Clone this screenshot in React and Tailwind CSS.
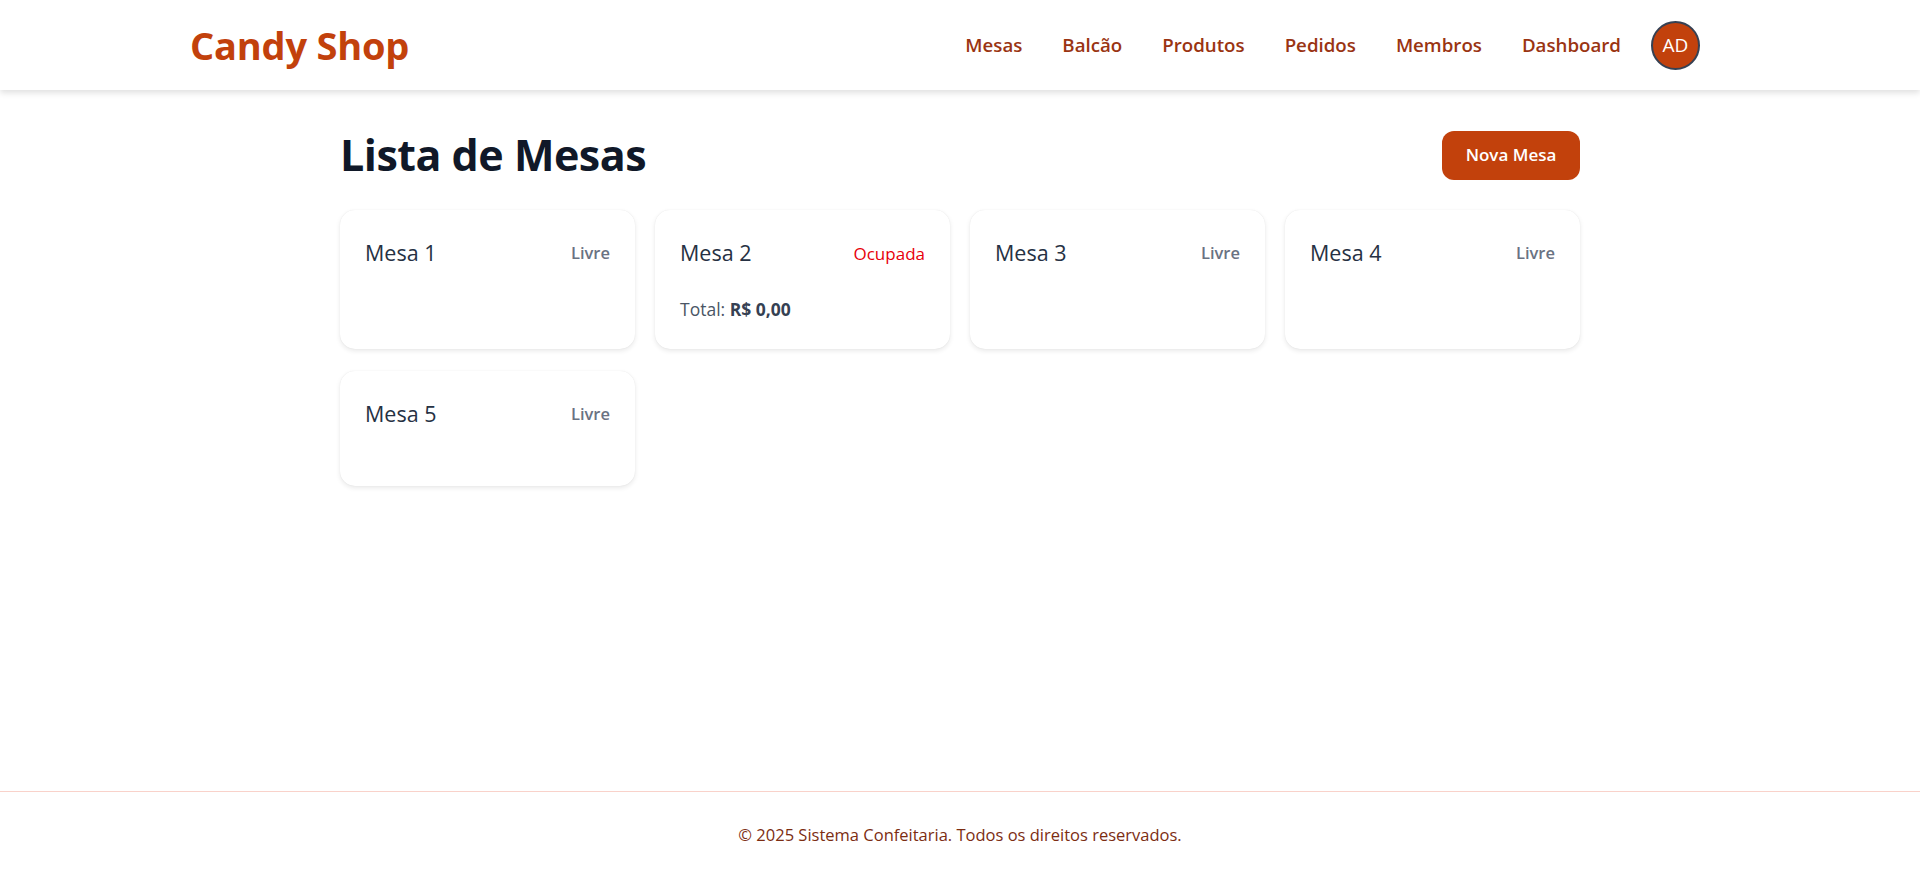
import React from "react";

const mesas = [
  { nome: "Mesa 1", status: "Livre" },
  { nome: "Mesa 2", status: "Ocupada", total: "R$ 0,00" },
  { nome: "Mesa 3", status: "Livre" },
  { nome: "Mesa 4", status: "Livre" },
  { nome: "Mesa 5", status: "Livre" },
];

const links = ["Mesas", "Balcão", "Produtos", "Pedidos", "Membros", "Dashboard"];

function MesaCard({ mesa }) {
  const ocupada = mesa.status === "Ocupada";
  return (
    <div className="bg-white rounded-[15px] p-[25px] min-h-[115px] shadow-[0_2px_5px_rgba(0,0,0,0.09),0_0_1px_rgba(0,0,0,0.1)]">
      <div className="flex items-center justify-between h-[35px] pt-[2px]">
        <span className="text-[21.5px] font-medium text-[#263143]">{mesa.nome}</span>
        <span
          className={
            ocupada
              ? "text-[17px] font-medium text-[#e7000b]"
              : "text-[16.5px] font-semibold text-[#6a7282]"
          }
        >
          {mesa.status}
        </span>
      </div>
      {mesa.total && (
        <p className="mt-[24px] text-[17.5px] leading-[30px] text-[#4a5565]">
          Total: <span className="font-bold text-[#364153]">{mesa.total}</span>
        </p>
      )}
    </div>
  );
}

export default function App() {
  return (
    <div className="min-h-screen flex flex-col bg-white font-['Open_Sans',sans-serif]">
      <header className="bg-white shadow-[0_3px_6px_rgba(0,0,0,0.12)] relative z-10">
        <div className="w-[1600px] mx-auto px-[30px] h-[90px] flex items-center justify-between">
          <span className="text-[38px] font-bold text-[#c2410c] tracking-[-0.2px]">Candy Shop</span>
          <nav className="flex items-center pr-[30px]">
            <div className="flex items-center gap-[40px]">
              {links.map((l) => (
                <a key={l} className="text-[18.7px] font-semibold text-[#9a3412] cursor-pointer">
                  {l}
                </a>
              ))}
            </div>
            <div className="ml-[30px] w-[49px] h-[49px] rounded-full bg-[#c2410c] border-2 border-[#364153] flex items-center justify-center text-white text-[19px]">
              AD
            </div>
          </nav>
        </div>
      </header>

      <main className="flex-1">
        <div className="w-[1240px] mx-auto pt-[40px] pb-[40px]">
          <div className="flex items-center justify-between mb-[30px] h-[50px]">
            <h1 className="text-[43px] font-bold text-[#101828] tracking-[-0.5px]">Lista de Mesas</h1>
            <button className="bg-[#c2410c] text-white text-[17px] font-semibold rounded-[12px] w-[138px] h-[49px]">
              Nova Mesa
            </button>
          </div>
          <div className="grid grid-cols-4 gap-x-[20px] gap-y-[22px]">
            {mesas.map((m) => (
              <MesaCard key={m.nome} mesa={m} />
            ))}
          </div>
        </div>
      </main>

      <footer className="border-t border-[#f9d2ca] py-[30px] text-center">
        <p className="text-[16.5px] leading-[25px] text-[#7c2d12]">
          © 2025 Sistema Confeitaria. Todos os direitos reservados.
        </p>
      </footer>
    </div>
  );
}
